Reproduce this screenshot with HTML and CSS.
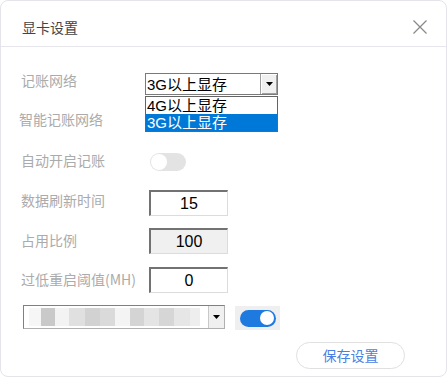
FILE: index.html
```html
<!DOCTYPE html>
<html lang="zh">
<head>
<meta charset="utf-8">
<link rel="stylesheet" href="styles.css">
</head>
<body>
<div class="dialog">
  <div class="header">
    <span class="title">显卡设置</span>
    <svg class="close" width="16" height="16" viewBox="0 0 16 16"><path d="M1.5 1.5 L14.5 14.5 M14.5 1.5 L1.5 14.5" stroke="#8a8a8a" stroke-width="1.3" fill="none"/></svg>
  </div>
  <div class="body">
    <div class="row r1">
      <span class="label">记账网络</span>
      <div class="combo">
        <div class="combo-box">
          <span class="combo-text">3G以上显存</span>
          <span class="combo-btn"><svg width="7" height="4" viewBox="0 0 7 4"><path d="M0 0 H7 L3.5 4 Z" fill="#000"/></svg></span>
        </div>
        <div class="combo-list">
          <div class="opt">4G以上显存</div>
          <div class="opt sel">3G以上显存</div>
        </div>
      </div>
    </div>
    <div class="row r2">
      <span class="label l2">智能记账网络</span>
    </div>
    <div class="row r3">
      <span class="label">自动开启记账</span>
      <span class="toggle off"><span class="knob"></span></span>
    </div>
    <div class="row r4">
      <span class="label">数据刷新时间</span>
      <span class="field">15</span>
    </div>
    <div class="row r5">
      <span class="label l5">占用比例</span>
      <span class="field ro">100</span>
    </div>
    <div class="row r6">
      <span class="label l6">过低重启阈值(MH)</span>
      <span class="field">0</span>
    </div>
    <div class="row r7">
      <div class="gpu-select">
        <div class="blur">
          <span class="b b0"></span><span class="b b1"></span><span class="b b2"></span><span class="b b3"></span><span class="b b4"></span><span class="b b5"></span><span class="b b6"></span><span class="b b7"></span><span class="b b8"></span><span class="b b9"></span><span class="b b10"></span><span class="b b11"></span>
        </div>
        <span class="gpu-btn"><svg width="7" height="4" viewBox="0 0 7 4"><path d="M0 0 H7 L3.5 4 Z" fill="#000"/></svg></span>
      </div>
      <span class="toggle-wrap"><span class="toggle on"><span class="knob"></span></span></span>
    </div>
    <div class="footer">
      <button class="save">保存设置</button>
    </div>
  </div>
</div>
</body>
</html>
```

FILE: styles.css
```css
* { box-sizing: border-box; }
html, body { margin: 0; padding: 0; background: #fff; }
body {
  width: 448px;
  height: 378px;
  font-family: "Noto Sans CJK SC", "Noto Sans", sans-serif;
}
.dialog {
  width: 447px;
  height: 377px;
  border: 1px solid #e4e4ea;
  border-radius: 8px;
  background: #fff;
  display: flex;
  flex-direction: column;
}
.header {
  height: 46px;
  border-bottom: 1px solid #e6e6ec;
  display: flex;
  align-items: center;
  justify-content: space-between;
  padding: 0 18px 0 21px;
  flex-shrink: 0;
}
.title {
  font-size: 14px;
  color: #444;
  line-height: 20px;
  margin-top: 6px;
}
.close { margin-top: 6px; }
.body {
  display: flex;
  flex-direction: column;
  padding: 23px 0 0 20px;
}
.row {
  display: flex;
  align-items: flex-start;
}
.label {
  width: 128px;
  flex-shrink: 0;
  font-size: 14px;
  line-height: 20px;
  color: #ababab;
  white-space: nowrap;
}
.r1 { height: 39px; }
.r2 { height: 41px; }
.r3 { height: 39px; }
.r4 { height: 39px; }
.r5 { height: 39px; }
.r6 { height: 38px; }
.r7 { height: 37px; }
.l2 { margin-left: -2px; width: 130px; }
.r4 .label { margin-top: 1px; }
.l5 { margin-top: 2px; }
.l6 { margin-top: 2px; }

/* combo (row 1) */
.combo {
  position: relative;
  margin-left: -4px;
  margin-top: 3px;
}
.combo-box {
  width: 133px;
  height: 22px;
  border: 1px solid #7a7a7a;
  background: #fff;
  display: flex;
  align-items: center;
  justify-content: space-between;
}
.combo-text, .opt {
  font-family: "Liberation Sans", "Noto Sans CJK SC", sans-serif;
  font-size: 15px;
  color: #000;
  line-height: 17px;
  padding-left: 1px;
  white-space: nowrap;
}
.combo-btn {
  width: 17px;
  height: 20px;
  background: #f0f0f0;
  border-left: 1px solid #a0a0a0;
  display: flex;
  align-items: center;
  justify-content: center;
  box-shadow: inset 1px 1px 0 #fff, inset -1px -1px 0 #a0a0a0;
}
.combo-list {
  position: absolute;
  left: 0;
  top: 23px;
  width: 133px;
  border: 1px solid #646464;
  background: #fff;
  z-index: 2;
}
.opt { height: 17px; }
.opt.sel { background: #0078d7; color: #fff; }

/* toggles */
.toggle {
  display: inline-flex;
  align-items: center;
  border-radius: 9px;
  padding: 1px;
}
.toggle.off {
  width: 36px;
  height: 18px;
  background: #e3e3e3;
  margin-left: 1px;
  margin-top: 3px;
}
.toggle.off .knob {
  width: 16px;
  height: 16px;
  border-radius: 50%;
  background: #fff;
}
.toggle-wrap {
  width: 45px;
  height: 24px;
  background: #efefef;
  margin-left: 10px;
  margin-top: 1px;
  display: flex;
  align-items: center;
  justify-content: center;
}
.toggle.on {
  width: 36px;
  height: 17px;
  background: #1f7ae0;
  justify-content: flex-end;
  padding: 1px 2px;
}
.toggle.on .knob {
  width: 14px;
  height: 14px;
  border-radius: 50%;
  background: #fff;
}

/* fields */
.field {
  width: 79px;
  height: 26px;
  border-style: solid;
  border-width: 2px 1px 1px 2px;
  border-color: #727272 #dcdcdc #dcdcdc #727272;
  background: #fff;
  font-family: "Liberation Sans", sans-serif;
  font-size: 16px;
  color: #000;
  display: flex;
  align-items: center;
  justify-content: center;
}
.r4 .field { margin-top: 1px; }
.field.ro { background: #f0f0f0; }

/* gpu select */
.gpu-select {
  width: 202px;
  height: 24px;
  margin-left: 2px;
  border-style: solid;
  border-width: 1px;
  border-color: #808080 #b0b0b0 #b0b0b0 #808080;
  background: #fff;
  display: flex;
  align-items: center;
}
.blur {
  flex: 1;
  height: 20px;
  display: flex;
  align-items: center;
  padding-left: 5px;
}
.b { height: 18px; display: block; }
.b0 { width: 12px; background: #f6f6f6; }
.b1 { width: 14px; background: #c9c9c9; }
.b2 { width: 14px; background: #f3f3f3; }
.b3 { width: 16px; background: #e0e0e0; }
.b4 { width: 15px; background: #d2d2d2; }
.b5 { width: 15px; background: #dadada; }
.b6 { width: 15px; background: #f4f4f4; }
.b7 { width: 14px; background: #d4d4d4; }
.b8 { width: 15px; background: #e4e4e4; }
.b9 { width: 15px; background: #d6d6d6; }
.b10 { width: 16px; background: #e6e6e6; }
.b11 { width: 10px; background: #eeeeee; }
.gpu-btn {
  width: 16px;
  height: 22px;
  background: #f0f0f0;
  border-left: 1px solid #c8c8c8;
  display: flex;
  align-items: center;
  justify-content: center;
}

/* footer */
.footer {
  display: flex;
  justify-content: flex-end;
  padding-right: 41px;
}
.save {
  width: 109px;
  height: 27px;
  border: 1px solid #e0e0e0;
  border-radius: 14px;
  background: #fff;
  font-family: "Noto Sans CJK SC", sans-serif;
  font-size: 14px;
  color: #4a7fe3;
  padding: 0;
  line-height: 25px;
}
```
